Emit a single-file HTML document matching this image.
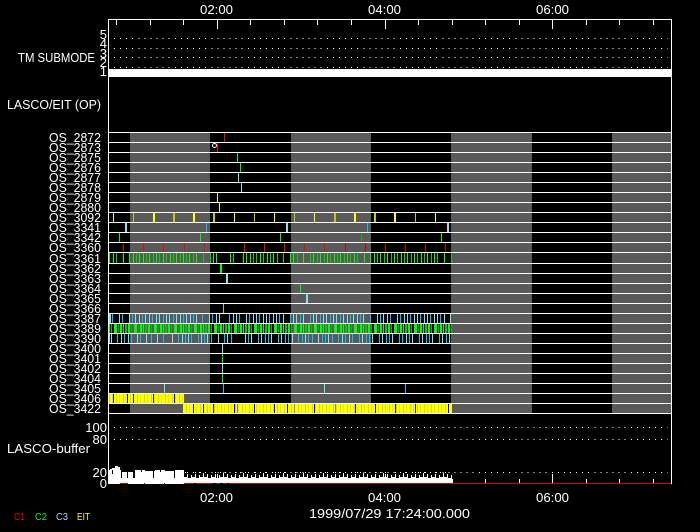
<!DOCTYPE html>
<html><head><meta charset="utf-8"><style>
html,body{margin:0;padding:0;background:#000;width:700px;height:532px;overflow:hidden}
svg{display:block}
text{font-family:"Liberation Sans",sans-serif;font-size:13px;fill:#fff;stroke:none}
path[stroke]{fill:none}
.c{shape-rendering:crispEdges}
</style></head><body>
<svg width="700" height="532" viewBox="0 0 700 532" xmlns="http://www.w3.org/2000/svg">
<defs>
<pattern id="gp" patternUnits="userSpaceOnUse" x="108" y="323" width="20" height="10">
<g shape-rendering="crispEdges"><rect x="0" width="2" height="10" fill="#0f0"/><rect x="3" width="1" height="10" fill="#00c000"/><rect x="6" width="3" height="10" fill="#0f0"/><rect x="10" width="1" height="10" fill="#00b000"/><rect x="12" width="2" height="10" fill="#0f0"/><rect x="15" width="1" height="10" fill="#0f0"/><rect x="17" width="2" height="10" fill="#00d000"/></g>
</pattern>
<pattern id="yp" patternUnits="userSpaceOnUse" x="108" y="393" width="7" height="20">
<g shape-rendering="crispEdges"><rect width="7" height="20" fill="#ff0"/><rect x="1" width="1" height="20" fill="#d8d800"/><rect x="4" width="1" height="20" fill="#e8e800"/></g>
</pattern>
<pattern id="hp" patternUnits="userSpaceOnUse" x="184" y="472" width="20" height="12">
<g shape-rendering="crispEdges" fill="#fff"><rect x="1" y="0" width="1" height="1"/><rect x="11" y="0" width="1" height="1"/><rect x="16" y="0" width="1" height="1"/><rect x="0" y="5" width="3" height="6"/><rect x="3" y="2" width="1" height="9"/><rect x="4" y="6" width="3" height="5"/><rect x="7" y="3" width="1" height="8"/><rect x="8" y="5" width="3" height="6"/><rect x="11" y="2" width="1" height="9"/><rect x="12" y="6" width="3" height="5"/><rect x="15" y="3" width="1" height="8"/><rect x="16" y="5" width="3" height="6"/><rect x="19" y="1" width="1" height="11"/></g>
</pattern>
</defs>
<rect width="700" height="532" fill="#000"/>
<g class="c">
<g fill="#5a5a5a"><rect x="130" y="132" width="80" height="281"/><rect x="291" y="132" width="80" height="281"/><rect x="451" y="132" width="81" height="281"/><rect x="612" y="132" width="59" height="281"/></g>
<path stroke="#f00" d="M224.5 132v10M217.5 142v10M143.5 242v10M163.5 242v10M184.5 242v10M204.5 242v10M244.5 242v10M264.5 242v10M284.5 242v10M304.5 242v10M324.5 242v10"/>
<path stroke="#c80000" d="M123.5 242v10M345.5 242v10M365.5 242v10M385.5 242v10M405.5 242v10M425.5 242v10M445.5 242v10"/>
<path stroke="#0f0" d="M237.5 152v10M240.5 162v10M119.5 232v10M200.5 232v10M280.5 232v10M441.5 232v10M300.5 283v10M222.5 353v10M222.5 373v10"/>
<path stroke="#00c000" d="M361.5 232v10"/>
<path stroke="#0f0" d="M109.5 252v11M113.5 252v11M123.5 252v11M129.5 252v11M133.5 252v11M139.5 252v11M143.5 252v11M149.5 252v11M156.5 252v11M163.5 252v11M170.5 252v11M176.5 252v11M183.5 252v11M189.5 252v11M196.5 252v11M213.5 252v11M216.5 252v11M230.5 252v11M243.5 252v11M246.5 252v11M250.5 252v11M260.5 252v11M267.5 252v11M273.5 252v11M290.5 252v11M293.5 252v11M303.5 252v11M313.5 252v11M320.5 252v11M327.5 252v11M334.5 252v11M340.5 252v11M347.5 252v11M354.5 252v11M364.5 252v11M370.5 252v11M374.5 252v11M380.5 252v11M387.5 252v11M394.5 252v11M401.5 252v11M407.5 252v11M414.5 252v11M421.5 252v11M427.5 252v11M434.5 252v11M444.5 252v11"/>
<path stroke="#00d800" d="M116.5 252v11M136.5 252v11M146.5 252v11M153.5 252v11M159.5 252v11M166.5 252v11M173.5 252v11M180.5 252v11M186.5 252v11M193.5 252v11M203.5 252v11M210.5 252v11M233.5 252v11M253.5 252v11M256.5 252v11M263.5 252v11M270.5 252v11M277.5 252v11M283.5 252v11M297.5 252v11M310.5 252v11M317.5 252v11M324.5 252v11M330.5 252v11M337.5 252v11M344.5 252v11M350.5 252v11M357.5 252v11M377.5 252v11M384.5 252v11M391.5 252v11M397.5 252v11M404.5 252v11M411.5 252v11M417.5 252v11M424.5 252v11M431.5 252v11M437.5 252v11M451.5 252v11"/>
<path stroke="#0f0" stroke-width="2" d="M221 263v10"/>
<path stroke="#8ce0f0" d="M238.5 172v10M241.5 182v10"/>
<path stroke="#8ce0f0" stroke-width="2" d="M126 222v10M287 222v10M448 222v10M227 273v10M307 293v10"/>
<path stroke="#00c8ff" d="M206.5 222v10M367.5 222v10"/>
<path stroke="#ff0" d="M217.5 192v10M219.5 202v10M113.5 212v10M234.5 212v10M274.5 212v10M314.5 212v10M435.5 212v10"/>
<path stroke="#c8c800" d="M133.5 212v10M254.5 212v10M294.5 212v10M415.5 212v10M223.5 303v10"/>
<path stroke="#ff0" stroke-width="2" d="M154 212v10M194 212v10M355 212v10M395 212v10"/>
<path stroke="#c8c800" stroke-width="2" d="M174 212v10M214 212v10M335 212v10M375 212v10"/>
<path stroke="#00c8ff" d="M112.5 313v10M122.5 313v10M132.5 313v10M142.5 313v10M152.5 313v10M163.5 313v10M173.5 313v10M183.5 313v10M193.5 313v10M202.5 313v10M212.5 313v10M229.5 313v10M239.5 313v10M249.5 313v10M259.5 313v10M269.5 313v10M279.5 313v10M290.5 313v10M300.5 313v10M310.5 313v10M320.5 313v10M330.5 313v10M340.5 313v10M350.5 313v10M360.5 313v10M370.5 313v10M380.5 313v10M390.5 313v10M400.5 313v10M410.5 313v10M420.5 313v10M430.5 313v10M440.5 313v10"/>
<path stroke="#8ce0f0" d="M109.5 313v10M110.5 313v10M119.5 313v10M129.5 313v10M135.5 313v10M139.5 313v10M145.5 313v10M149.5 313v10M156.5 313v10M159.5 313v10M166.5 313v10M169.5 313v10M176.5 313v10M180.5 313v10M186.5 313v10M190.5 313v10M196.5 313v10M209.5 313v10M216.5 313v10M219.5 313v10M233.5 313v10M236.5 313v10M246.5 313v10M253.5 313v10M256.5 313v10M263.5 313v10M266.5 313v10M273.5 313v10M276.5 313v10M283.5 313v10M293.5 313v10M296.5 313v10M303.5 313v10M313.5 313v10M316.5 313v10M323.5 313v10M326.5 313v10M333.5 313v10M336.5 313v10M343.5 313v10M347.5 313v10M353.5 313v10M357.5 313v10M363.5 313v10M377.5 313v10M383.5 313v10M387.5 313v10M397.5 313v10M404.5 313v10M407.5 313v10M414.5 313v10M417.5 313v10M424.5 313v10M427.5 313v10M434.5 313v10M437.5 313v10M444.5 313v10M450.5 313v10"/>
<rect x="108" y="323" width="344" height="10" fill="url(#gp)"/>
<path stroke="#8ce0f0" d="M109.5 333v10M111.5 333v10M121.5 333v10M128.5 333v10M137.5 333v10M146.5 333v10M157.5 333v10M172.5 333v10M182.5 333v10M188.5 333v10M201.5 333v10M207.5 333v10M218.5 333v10M227.5 333v10M245.5 333v10M251.5 333v10M261.5 333v10M271.5 333v10M281.5 333v10M292.5 333v10M305.5 333v10M318.5 333v10M328.5 333v10M342.5 333v10M349.5 333v10M362.5 333v10M372.5 333v10M382.5 333v10M392.5 333v10M406.5 333v10M412.5 333v10M422.5 333v10M432.5 333v10M442.5 333v10M449.5 333v10"/>
<path stroke="#00c8ff" d="M117.5 333v10M124.5 333v10M131.5 333v10M140.5 333v10M151.5 333v10M163.5 333v10M178.5 333v10M185.5 333v10M191.5 333v10M198.5 333v10M204.5 333v10M211.5 333v10M224.5 333v10M231.5 333v10M248.5 333v10M258.5 333v10M265.5 333v10M268.5 333v10M278.5 333v10M285.5 333v10M288.5 333v10M298.5 333v10M302.5 333v10M308.5 333v10M312.5 333v10M322.5 333v10M325.5 333v10M332.5 333v10M338.5 333v10M345.5 333v10M352.5 333v10M359.5 333v10M366.5 333v10M369.5 333v10M379.5 333v10M386.5 333v10M389.5 333v10M399.5 333v10M402.5 333v10M409.5 333v10M419.5 333v10M426.5 333v10M429.5 333v10M439.5 333v10M446.5 333v10"/>
<path stroke="#8ce0f0" d="M222.5 343v10M222.5 363v10M164.5 383v10M324.5 383v10"/>
<path stroke="#00c8ff" d="M223.5 383v10M405.5 383v10"/>
<rect x="108" y="393" width="76" height="10" fill="url(#yp)"/>
<rect x="183" y="403" width="269" height="10" fill="url(#yp)"/>
<path stroke="#000" d="M113.5 393v10M127.5 393v10M133.5 393v10M153.5 393v10M174.5 393v10M234.5 403v10M254.5 403v10M274.5 403v10M287.5 403v10M314.5 403v10M355.5 403v10M375.5 403v10M395.5 403v10M415.5 403v10M448.5 403v10M203.5 403v10M213.5 403v10M193.5 403v10"/>
<path stroke="#808080" d="M237.5 403v10M294.5 403v10M335.5 403v10"/>
<path stroke="#fff" d="M108 132.5H671M108 142.5H671M108 152.5H671M108 162.5H671M108 172.5H671M108 182.5H671M108 192.5H671M108 202.5H671M108 212.5H671M108 222.5H671M108 232.5H671M108 242.5H671M108 252.5H671M108 263.5H671M108 273.5H671M108 283.5H671M108 293.5H671M108 303.5H671M108 313.5H671M108 323.5H671M108 333.5H671M108 343.5H671M108 353.5H671M108 363.5H671M108 373.5H671M108 383.5H671M108 393.5H671M108 403.5H671M108 413.5H671"/>
<rect x="108" y="69" width="563" height="8" fill="#fff"/>
<path stroke="#fff" stroke-dasharray="1 5.08" d="M114 38.5H668M114 48.5H668M114 57.5H668M114 67.5H668M114 427.5H668M114 439.5H668M114 472.5H668"/>
<path fill="#fff" d="M108 484V470H110V469H112V468H115V466H118V467H120V470H121V478H122V472H126V473H128V472H134V478H135V470H145V471H155V470H165V471H175V470H184V484Z"/>
<path stroke="#000" d="M127.5 472v6M133.5 472v6M153.5 471v7M174.5 471v7M112.5 470v4M141.5 470v2M160.5 470v2"/>
<rect x="184" y="472" width="268" height="12" fill="url(#hp)"/>
<path stroke="#e00000" d="M120 483.5H128M144 483.5H145M164 483.5H165M184 483.5H194M196 483.5H213M216 483.5H220M223 483.5H227M229 483.5H671"/>
<path stroke="#fff" d="M108.5 19V484M671.5 19V484M108 19.5H672M116.5 19v6M150.5 19v6M183.5 19v6M250.5 19v6M284.5 19v6M317.5 19v6M351.5 19v6M418.5 19v6M452.5 19v6M485.5 19v6M519.5 19v6M586.5 19v6M619.5 19v6M653.5 19v6M217.5 19v10M385.5 19v10M552.5 19v10M116.5 479v4M150.5 479v4M183.5 479v4M250.5 479v4M284.5 479v4M317.5 479v4M351.5 479v4M418.5 479v4M452.5 479v4M485.5 479v4M519.5 479v4M586.5 479v4M619.5 479v4M653.5 479v4M217.5 474v9M385.5 474v9M552.5 474v9"/>
</g>
<circle cx="214.5" cy="145.5" r="2" fill="none" stroke="#fff"/>
<text x="200" y="14" textLength="33" lengthAdjust="spacingAndGlyphs">02:00</text>
<text x="368" y="14" textLength="33" lengthAdjust="spacingAndGlyphs">04:00</text>
<text x="536" y="14" textLength="33" lengthAdjust="spacingAndGlyphs">06:00</text>
<text x="18" y="62" textLength="77" lengthAdjust="spacingAndGlyphs">TM SUBMODE</text>
<text x="7" y="109" textLength="94" lengthAdjust="spacingAndGlyphs">LASCO/EIT (OP)</text>
<g text-anchor="end"><text x="107" y="39">5</text><text x="107" y="48">4</text><text x="107" y="58">3</text><text x="107" y="67">2</text><text x="107" y="76">1</text></g>
<g>
<text x="49" y="142" textLength="52" lengthAdjust="spacingAndGlyphs">OS_2872</text>
<text x="49" y="152" textLength="52" lengthAdjust="spacingAndGlyphs">OS_2873</text>
<text x="49" y="162" textLength="52" lengthAdjust="spacingAndGlyphs">OS_2875</text>
<text x="49" y="172" textLength="52" lengthAdjust="spacingAndGlyphs">OS_2876</text>
<text x="49" y="182" textLength="52" lengthAdjust="spacingAndGlyphs">OS_2877</text>
<text x="49" y="192" textLength="52" lengthAdjust="spacingAndGlyphs">OS_2878</text>
<text x="49" y="202" textLength="52" lengthAdjust="spacingAndGlyphs">OS_2879</text>
<text x="49" y="212" textLength="52" lengthAdjust="spacingAndGlyphs">OS_2880</text>
<text x="49" y="222" textLength="52" lengthAdjust="spacingAndGlyphs">OS_3092</text>
<text x="49" y="232" textLength="52" lengthAdjust="spacingAndGlyphs">OS_3341</text>
<text x="49" y="242" textLength="52" lengthAdjust="spacingAndGlyphs">OS_3342</text>
<text x="49" y="252" textLength="52" lengthAdjust="spacingAndGlyphs">OS_3360</text>
<text x="49" y="263" textLength="52" lengthAdjust="spacingAndGlyphs">OS_3361</text>
<text x="49" y="273" textLength="52" lengthAdjust="spacingAndGlyphs">OS_3362</text>
<text x="49" y="283" textLength="52" lengthAdjust="spacingAndGlyphs">OS_3363</text>
<text x="49" y="293" textLength="52" lengthAdjust="spacingAndGlyphs">OS_3364</text>
<text x="49" y="303" textLength="52" lengthAdjust="spacingAndGlyphs">OS_3365</text>
<text x="49" y="313" textLength="52" lengthAdjust="spacingAndGlyphs">OS_3366</text>
<text x="49" y="323" textLength="52" lengthAdjust="spacingAndGlyphs">OS_3387</text>
<text x="49" y="333" textLength="52" lengthAdjust="spacingAndGlyphs">OS_3389</text>
<text x="49" y="343" textLength="52" lengthAdjust="spacingAndGlyphs">OS_3390</text>
<text x="49" y="353" textLength="52" lengthAdjust="spacingAndGlyphs">OS_3400</text>
<text x="49" y="363" textLength="52" lengthAdjust="spacingAndGlyphs">OS_3401</text>
<text x="49" y="373" textLength="52" lengthAdjust="spacingAndGlyphs">OS_3402</text>
<text x="49" y="383" textLength="52" lengthAdjust="spacingAndGlyphs">OS_3404</text>
<text x="49" y="393" textLength="52" lengthAdjust="spacingAndGlyphs">OS_3405</text>
<text x="49" y="403" textLength="52" lengthAdjust="spacingAndGlyphs">OS_3406</text>
<text x="49" y="413" textLength="52" lengthAdjust="spacingAndGlyphs">OS_3422</text>
</g>
<g text-anchor="end"><text x="107" y="432">100</text><text x="107" y="444">80</text><text x="107" y="477">20</text><text x="107" y="488">0</text></g>
<text x="7" y="453" textLength="83" lengthAdjust="spacingAndGlyphs">LASCO-buffer</text>
<text x="200" y="502" textLength="33" lengthAdjust="spacingAndGlyphs">02:00</text>
<text x="368" y="502" textLength="33" lengthAdjust="spacingAndGlyphs">04:00</text>
<text x="536" y="502" textLength="33" lengthAdjust="spacingAndGlyphs">06:00</text>
<text x="309" y="518" textLength="161" lengthAdjust="spacingAndGlyphs">1999/07/29 17:24:00.000</text>
<text x="14" y="520" textLength="11" lengthAdjust="spacingAndGlyphs" style="font-size:10px;fill:#f00">C1</text>
<text x="35" y="520" textLength="12" lengthAdjust="spacingAndGlyphs" style="font-size:10px;fill:#0f0">C2</text>
<text x="56" y="520" textLength="12" lengthAdjust="spacingAndGlyphs" style="font-size:10px;fill:#8ce0f0">C3</text>
<text x="77" y="520" textLength="13" lengthAdjust="spacingAndGlyphs" style="font-size:10px;fill:#ff0">EIT</text>
</svg>
</body></html>
